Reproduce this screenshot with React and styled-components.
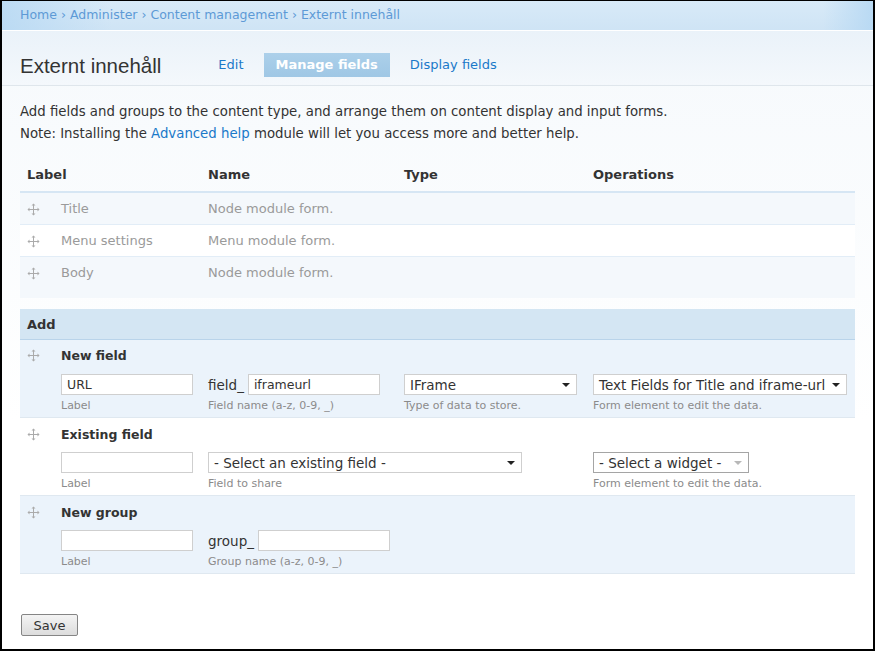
import React from "react";
import styled, { createGlobalStyle } from "styled-components";

const GlobalStyle = createGlobalStyle`
  html, body {
    margin: 0;
    padding: 0;
    background: #000;
  }
  body {
    font-family: "DejaVu Sans", Verdana, sans-serif;
    font-size: 13px;
    color: #333;
  }
`;

const Frame = styled.div`
  width: 875px;
  height: 651px;
  box-sizing: border-box;
  border: 2px solid #000;
  border-top-width: 1px;
  background: linear-gradient(#f5f9fc 0px, #ffffff 420px);
  overflow: hidden;
`;

const Breadcrumb = styled.div`
  height: 30px;
  box-sizing: border-box;
  display: flex;
  align-items: center;
  padding: 0 18px 2px;
  font-size: 12.5px;
  color: #5d9ad6;
  background:
    linear-gradient(90deg, rgba(182, 216, 243, 0.8) 0px, rgba(212, 232, 247, 0) 110px),
    linear-gradient(270deg, rgba(182, 216, 243, 0.9) 0px, rgba(212, 232, 247, 0) 50px),
    linear-gradient(#d8eaf8, #cfe4f5);
  border-bottom: 1px solid #ffffff;
`;

const Crumb = styled.span`
  margin: 0 ${(p) => (p.sep ? "4px" : "0")};
`;

const Header = styled.div`
  height: 55px;
  box-sizing: border-box;
  display: flex;
  align-items: flex-end;
  padding: 0 18px 8px;
  background: linear-gradient(#eaf2f9, #f4f8fc);
  border-bottom: 1px solid #dfe6ec;
`;

const Title = styled.h1`
  margin: 0 57px 0 0;
  font-family: "Liberation Sans", Arial, sans-serif;
  font-weight: normal;
  font-size: 20.5px;
  line-height: 24px;
  color: #333;
  position: relative;
  top: 1px;
`;

const Tabs = styled.div`
  display: flex;
  align-items: center;
`;

const Tab = styled.a`
  display: block;
  padding: 0 ${(p) => (p.active ? "12px" : "0")};
  margin: 0 ${(p) => (p.active ? "20px" : "0")};
  height: 24px;
  line-height: 24px;
  font-size: 13px;
  font-weight: ${(p) => (p.active ? "bold" : "normal")};
  color: ${(p) => (p.active ? "#fff" : "#1a79c9")};
  background: ${(p) =>
    p.active ? "linear-gradient(#acd0ea, #9fc7e5)" : "transparent"};
`;

const Content = styled.div`
  padding: 15px 18px 0;
`;

const Para = styled.p`
  margin: 0;
  font-size: 13.3px;
  line-height: 22px;
  color: #333;
`;

const Link = styled.a`
  color: #1a79c9;
`;

const Table = styled.div`
  margin-top: 15px;
`;

const Grid = styled.div`
  display: grid;
  grid-template-columns: 188px 196px 189px 262px;
`;

const HeadRow = styled(Grid)`
  height: 33px;
  box-sizing: border-box;
  align-items: center;
  font-weight: bold;
  padding-bottom: 2px;
  border-bottom: 2px solid #d6e6f4;
`;

const HeadCell = styled.div`
  padding-left: ${(p) => (p.first ? "7px" : "0")};
`;

const Row = styled(Grid)`
  height: ${(p) => p.h || 32}px;
  align-items: start;
  padding-top: 8px;
  line-height: 16px;
  box-sizing: border-box;
  background: ${(p) => (p.shaded ? "#f4f8fc" : "#ffffff")};
  border-bottom: ${(p) => (p.last ? "none" : "1px solid #e2edf7")};
  color: #9a9a9a;
`;

const LabelCell = styled.div`
  display: flex;
  align-items: center;
  padding-left: 7px;
`;

const HandleBox = styled.span`
  display: inline-flex;
  width: 13px;
  height: 13px;
  margin-right: 21px;
`;

const Handle = () => (
  <HandleBox>
    <svg width="13" height="13" viewBox="0 0 13 13">
      <g fill="#ababab">
        <rect x="6" y="2" width="1" height="9" />
        <rect x="2" y="6" width="9" height="1" />
        <path d="M6.5 0.5 L8.5 2.5 L4.5 2.5 Z" />
        <path d="M6.5 12.5 L8.5 10.5 L4.5 10.5 Z" />
        <path d="M0.5 6.5 L2.5 4.5 L2.5 8.5 Z" />
        <path d="M12.5 6.5 L10.5 4.5 L10.5 8.5 Z" />
      </g>
    </svg>
  </HandleBox>
);

const AddHead = styled.div`
  margin-top: 11px;
  height: 31px;
  box-sizing: border-box;
  display: flex;
  align-items: center;
  padding: 1px 0 0 7px;
  font-weight: bold;
  background: #d4e6f3;
  border-bottom: 1px solid #b9d4ea;
`;

const AddRow = styled(Grid)`
  height: 78px;
  box-sizing: border-box;
  padding-top: ${(p) => (p.first ? 8 : 9)}px;
  grid-template-rows: ${(p) => (p.first ? 26 : 25)}px auto;
  background: ${(p) => (p.shaded ? "#ebf3fb" : "#ffffff")};
  border-bottom: 1px solid #dfe8f0;
`;

const AddTitle = styled.div`
  grid-column: 1 / -1;
  display: flex;
  align-items: center;
  align-self: start;
  height: 15px;
  padding-left: 7px;
  font-weight: bold;
  font-size: 12.5px;
  color: #333;
`;

const Field = styled.div`
  display: flex;
  flex-direction: column;
  padding-left: ${(p) => p.indent || 0}px;
`;

const Inline = styled.div`
  display: flex;
  align-items: center;
  font-size: 13.5px;
  color: #333;
`;

const Prefix = styled.span`
  margin-right: 4px;
`;

const Input = styled.div`
  width: ${(p) => p.w}px;
  height: 21px;
  box-sizing: border-box;
  border: 1px solid #cfcfcf;
  background: #fff;
  padding: 0 5px;
  line-height: 19px;
  font-size: 12.5px;
  color: #333;
`;

const Select = styled.div`
  width: ${(p) => p.w}px;
  height: 21px;
  box-sizing: border-box;
  border: 1px solid ${(p) => (p.dim ? "#a5a5a5" : "#cfcfcf")};
  background: #fff;
  padding: 0 6px 0 5px;
  display: flex;
  align-items: center;
  justify-content: space-between;
  font-size: 13.5px;
  color: #333;
  white-space: nowrap;
`;

const Arrow = styled.span`
  width: 0;
  height: 0;
  border-left: 4px solid transparent;
  border-right: 4px solid transparent;
  border-top: 4px solid ${(p) => (p.dim ? "#b8b8b8" : "#222")};
  margin-left: 6px;
`;

const Desc = styled.div`
  margin-top: 4px;
  font-size: 11px;
  line-height: 14px;
  color: #8b8b8b;
`;

const SaveButton = styled.button`
  margin-top: 40px;
  margin-left: 1px;
  width: 57px;
  height: 22px;
  font-family: "DejaVu Sans", Verdana, sans-serif;
  font-size: 13px;
  color: #333;
  border: 1px solid #858585;
  border-radius: 2px;
  background: linear-gradient(#f4f4f4, #dcdcdc);
  padding: 0;
`;

const rows = [
  { label: "Title", name: "Node module form.", shaded: true },
  { label: "Menu settings", name: "Menu module form." },
  { label: "Body", name: "Node module form.", shaded: true, last: true, h: 41 },
];

const App = () => (
  <>
    <GlobalStyle />
    <Frame>
      <Breadcrumb>
        <Crumb>Home</Crumb>
        <Crumb sep>›</Crumb>
        <Crumb>Administer</Crumb>
        <Crumb sep>›</Crumb>
        <Crumb>Content management</Crumb>
        <Crumb sep>›</Crumb>
        <Crumb>Externt innehåll</Crumb>
      </Breadcrumb>
      <Header>
        <Title>Externt innehåll</Title>
        <Tabs>
          <Tab>Edit</Tab>
          <Tab active>Manage fields</Tab>
          <Tab>Display fields</Tab>
        </Tabs>
      </Header>
      <Content>
        <Para>
          Add fields and groups to the content type, and arrange them on content
          display and input forms.
        </Para>
        <Para>
          Note: Installing the <Link>Advanced help</Link> module will let you
          access more and better help.
        </Para>

        <Table>
          <HeadRow>
            <HeadCell first>Label</HeadCell>
            <HeadCell>Name</HeadCell>
            <HeadCell>Type</HeadCell>
            <HeadCell>Operations</HeadCell>
          </HeadRow>
          {rows.map((r) => (
            <Row key={r.label} shaded={r.shaded} last={r.last} h={r.h}>
              <LabelCell>
                <Handle />
                {r.label}
              </LabelCell>
              <div>{r.name}</div>
              <div />
              <div />
            </Row>
          ))}

          <AddHead>Add</AddHead>

          <AddRow shaded first>
            <AddTitle>
              <Handle />
              New field
            </AddTitle>
            <Field indent={41}>
              <Input w={132}>URL</Input>
              <Desc>Label</Desc>
            </Field>
            <Field>
              <Inline>
                <Prefix>field_</Prefix>
                <Input w={132}>iframeurl</Input>
              </Inline>
              <Desc>Field name (a-z, 0-9, _)</Desc>
            </Field>
            <Field>
              <Select w={173}>
                IFrame
                <Arrow />
              </Select>
              <Desc>Type of data to store.</Desc>
            </Field>
            <Field>
              <Select w={254}>
                Text Fields for Title and iframe-url
                <Arrow />
              </Select>
              <Desc>Form element to edit the data.</Desc>
            </Field>
          </AddRow>

          <AddRow>
            <AddTitle>
              <Handle />
              Existing field
            </AddTitle>
            <Field indent={41}>
              <Input w={132} />
              <Desc>Label</Desc>
            </Field>
            <Field>
              <Select w={314}>
                - Select an existing field -
                <Arrow />
              </Select>
              <Desc>Field to share</Desc>
            </Field>
            <div />
            <Field>
              <Select w={156} dim>
                - Select a widget -
                <Arrow dim />
              </Select>
              <Desc>Form element to edit the data.</Desc>
            </Field>
          </AddRow>

          <AddRow shaded>
            <AddTitle>
              <Handle />
              New group
            </AddTitle>
            <Field indent={41}>
              <Input w={132} />
              <Desc>Label</Desc>
            </Field>
            <Field>
              <Inline>
                <Prefix>group_</Prefix>
                <Input w={132} />
              </Inline>
              <Desc>Group name (a-z, 0-9, _)</Desc>
            </Field>
            <div />
            <div />
          </AddRow>
        </Table>

        <SaveButton>Save</SaveButton>
      </Content>
    </Frame>
  </>
);

export default App;
